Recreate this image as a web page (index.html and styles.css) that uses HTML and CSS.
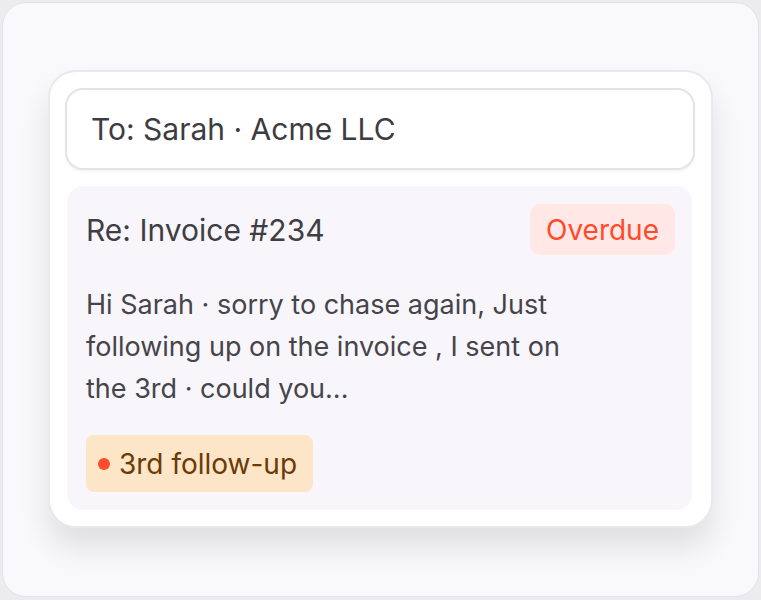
FILE: index.html
```html
<!DOCTYPE html>
<html lang="en">
<head>
    <meta charset="UTF-8">
    <meta name="viewport" content="width=device-width, initial-scale=1.0">
    <title>Follow-up preview</title>
    <link rel="stylesheet" href="styles.css">
</head>
<body>

<div class="frame">
    <div class="card">
        <!-- Recipient -->
        <div class="to-field">To: Sarah · Acme LLC</div>

        <!-- Message preview -->
        <div class="message">
            <div class="message-head">
                <span class="subject">Re: Invoice #234</span>
                <span class="badge-overdue">Overdue</span>
            </div>
            <p class="message-body">Hi Sarah · sorry to chase again, Just following up on the invoice , I sent on the 3rd · could you...</p>
            <span class="chip"><span class="dot"></span>3rd follow-up</span>
        </div>
    </div>
</div>

</body>
</html>
```

FILE: styles.css
```css
body {
    margin: 0;
    background-color: #ececef;
    font-family: 'Inter', 'Open Sans', sans-serif;
    color: #3f3e44;
}

.frame {
    margin: 2px 2px 3px 2px;
    height: 595px;
    box-sizing: border-box;
    background-color: #f9f8fb;
    border: 1px solid #e3e2e7;
    border-radius: 24px;
    padding: 67px 45px 0 45px;
}

.card {
    background-color: #fff;
    border: 2px solid #e9e8ec;
    border-radius: 28px;
    padding: 16px 16px 16px 15px;
    box-shadow: 0px 20px 30px rgba(0, 0, 0, 0.1);
}

.to-field {
    height: 78px;
    display: flex;
    align-items: center;
    padding-left: 24px;
    border: 2px solid #e4e3e7;
    border-radius: 18px;
    box-shadow: 0px 2px 2px rgba(0, 0, 0, 0.04);
    font-size: 30px;
    color: #3d3c42;
}

.message {
    margin: 16px 3px 0 2px;
    background-color: #f8f6fa;
    border-radius: 16px;
    padding: 18px 17px 18px 19px;
}

.message-head {
    display: flex;
    justify-content: space-between;
    align-items: center;
}

.subject {
    font-size: 30px;
    color: #3f3e44;
}

.badge-overdue {
    background-color: #ffe8e5;
    color: #ff4a2b;
    font-size: 28px;
    padding: 0 16px;
    height: 51px;
    display: flex;
    align-items: center;
    border-radius: 10px;
}

.message-body {
    margin: 29px 0 25px 0;
    max-width: 510px;
    font-size: 27px;
    line-height: 42px;
    color: #45444a;
}

.chip {
    display: inline-flex;
    align-items: center;
    gap: 9px;
    height: 57px;
    padding: 0 16px 0 12px;
    background-color: #fde5c8;
    color: #6b3a06;
    font-size: 28px;
    border-radius: 8px;
}

.dot {
    width: 12px;
    height: 12px;
    border-radius: 50%;
    background-color: #ff4a2b;
}
```
